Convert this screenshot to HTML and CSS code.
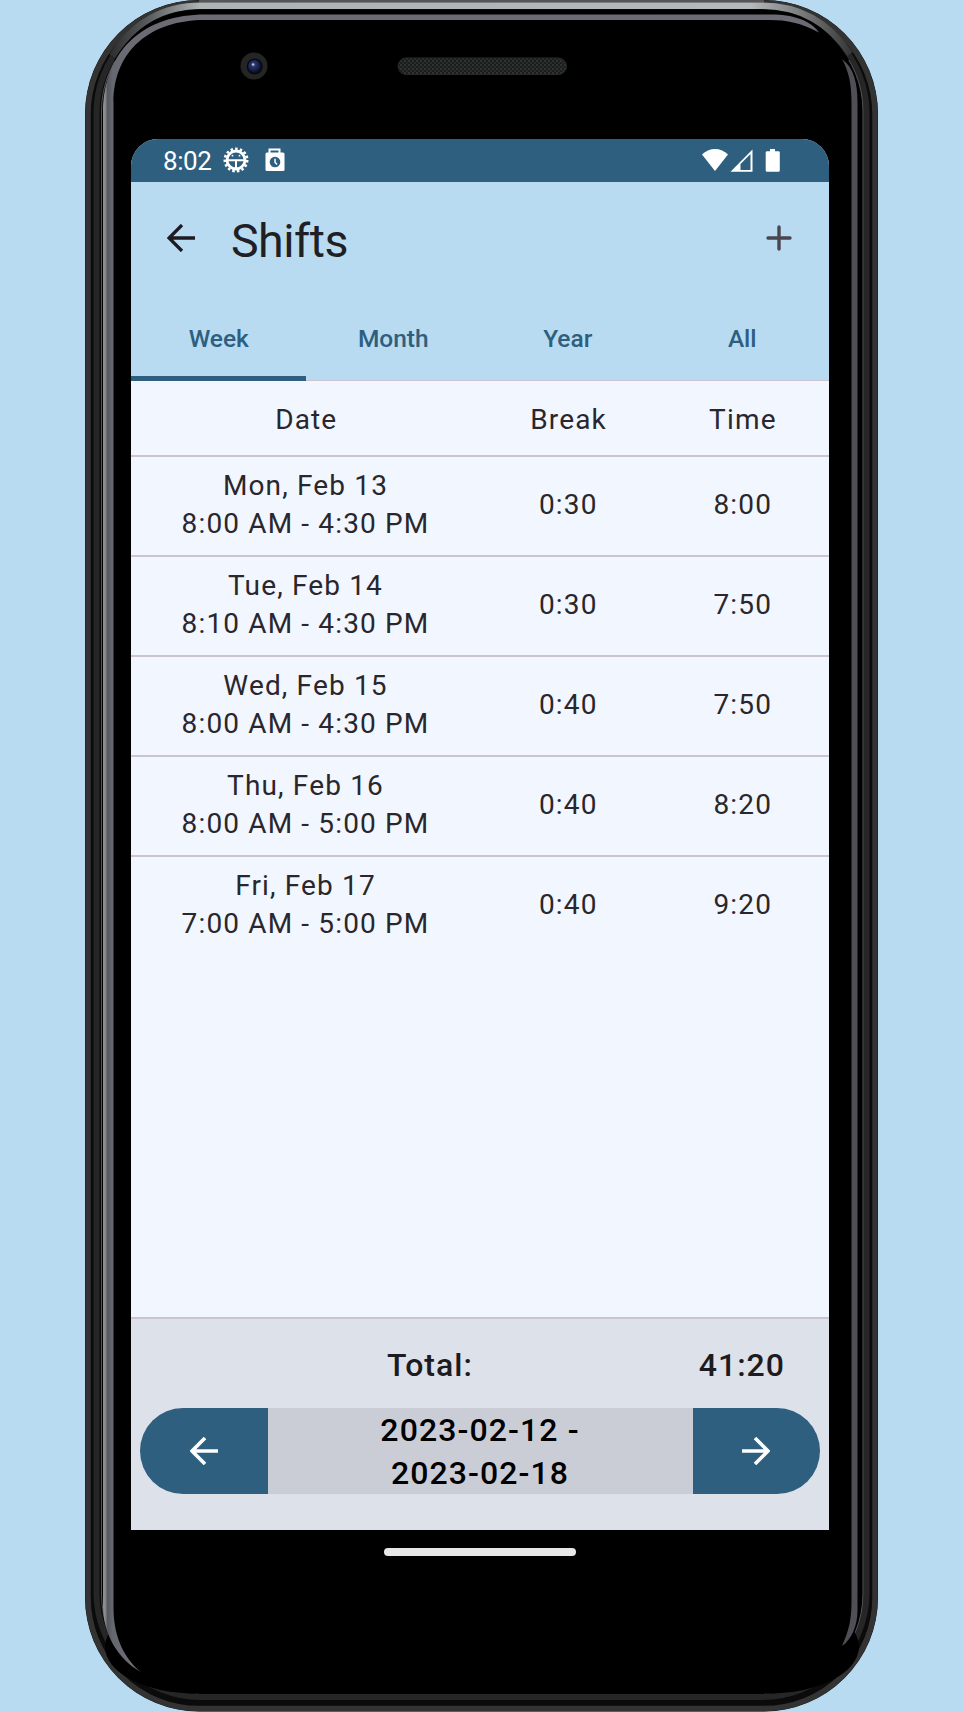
FILE: index.html
```html
<!DOCTYPE html>
<html lang="en">
<head>
<meta charset="utf-8">
<title>Shifts</title>
<link rel="stylesheet" href="styles.css">
</head>
<body>
<div class="stage">
<svg class="frame" viewBox="0 0 963 1712" aria-hidden="true">
  <defs>
    <linearGradient id="topBand" x1="100" x2="865" y1="0" y2="0" gradientUnits="userSpaceOnUse">
      <stop offset="0" stop-color="#222"/><stop offset=".06" stop-color="#555859"/><stop offset=".13" stop-color="#aeb3b5"/>
      <stop offset=".85" stop-color="#b4b9bb"/><stop offset=".93" stop-color="#6d6f70"/><stop offset="1" stop-color="#222"/>
    </linearGradient>
    <linearGradient id="leftBand" x1="103" x2="126" y1="0" y2="0" gradientUnits="userSpaceOnUse">
      <stop offset="0" stop-color="#8d8f91"/><stop offset=".08" stop-color="#8d8f91"/><stop offset=".2" stop-color="#55585e"/><stop offset=".42" stop-color="#656870"/><stop offset="1" stop-color="#6c6a74"/>
    </linearGradient>
    <radialGradient id="lens" cx=".42" cy=".36" r=".6">
      <stop offset="0" stop-color="#7480a8"/><stop offset=".25" stop-color="#2a376c"/><stop offset=".7" stop-color="#17204a"/><stop offset="1" stop-color="#0c0f20"/>
    </radialGradient>
    <pattern id="mesh" width="4" height="4" patternUnits="userSpaceOnUse">
      <rect width="4" height="4" fill="#1b1d1d"/><rect width="2" height="2" fill="#303333"/><rect x="2" y="2" width="2" height="2" fill="#292c2c"/>
    </pattern>
  </defs>
  <rect x="85" y="0" width="793" height="1711.500" rx="114" fill="#0b0b0b"/>
  <rect x="88" y="3" width="787" height="1705.500" rx="111" fill="none" stroke="#343333" stroke-width="5.500"/>
  <rect x="96.500" y="9" width="770" height="1688" rx="104" fill="none" stroke="#262626" stroke-width="6"/>
  <rect x="101.500" y="12" width="761.500" height="1681" rx="99" fill="#000" stroke="#555758" stroke-width="1"/>
  <rect x="105" y="1600" width="754" height="93.500" rx="90" fill="#000"/>
  <path d="M199 1693H764" stroke="#000" stroke-width="2"/>
  <path d="M199 1H764" stroke="#555" stroke-width="3"/>
  <path d="M112 56C134 22 163 5.800 201 5.800H762C800 5.800 829 23 850 54" fill="none" stroke="url(#topBand)" stroke-width="6.500"/>
  <path d="M116 62C137 27 165 11.700 203 11.700H760C798 11.700 826 27 847 61" fill="none" stroke="#000" stroke-width="5"/>
  <path d="M103 114C103 48 146 14.500 205 14.500H771C796 14.500 812 22 819 32.500C801 23 787 20 770 20H205C151 20 113.500 50 113.500 103V1608C113.500 1640 127 1661 141 1672C119 1660 103 1635 103 1606Z" fill="url(#leftBand)"/>
  <path d="M842 59C854 68 857.500 83 857.500 103V1611C857.500 1626 851 1640 842 1646C849 1630 851.500 1620 851.500 1601V103C851.500 84 849 72 842 59Z" fill="#504e56"/>
  <circle cx="254" cy="66" r="13.500" fill="#252525"/><circle cx="254.700" cy="66.500" r="8" fill="#080a10"/><circle cx="254.500" cy="66.500" r="6.500" fill="url(#lens)"/><circle cx="253" cy="64.500" r="1.200" fill="#b2bad5"/>
  <rect x="398" y="58" width="168.500" height="16.500" rx="8.250" fill="url(#mesh)" stroke="#282a2a"/>
</svg>
<main class="screen">
  <div class="status">
    <span class="clock">8:02</span>
    <svg class="gear" viewBox="0 0 26 26"><circle cx="13" cy="13" r="9" fill="none" stroke="#fff" stroke-width="2.800"/><circle cx="13" cy="13" r="11.200" fill="none" stroke="#fff" stroke-width="2.600" stroke-dasharray="2.500 2.190"/><path d="M4 13.200H22M13 13V22" stroke="#fff" stroke-width="2"/><circle cx="9.500" cy="8.700" r=".9" fill="#fff"/><circle cx="16.500" cy="8.700" r=".9" fill="#fff"/></svg>
    <svg class="lock" viewBox="0 0 20 24"><path d="M4.500 5V1.500H14.500V5" fill="none" stroke="#fff" stroke-width="2"/><rect x=".5" y="4.500" width="19" height="18.500" rx="1.500" fill="#fff"/><circle cx="10" cy="14" r="5.300" fill="#2e5f7f"/><path d="M10 10.800V14.300L12 16.400" fill="none" stroke="#fff" stroke-width="1.500"/></svg>
    <svg class="signals" viewBox="0 0 80 26"><path d="M1 6.500C8-1 20-1 27 6.500L14 23Z" fill="#fff"/><path d="M29.500 23.700L51.500 1.500V23.700Z" fill="#fff"/><path d="M39.500 22V16L49.500 6V22Z" fill="#2e5f7f"/><path d="M69 1h5v2.200h3.500a1.300 1.300 0 0 1 1.300 1.300v18a1.300 1.300 0 0 1-1.300 1.300H66a1.300 1.300 0 0 1-1.300-1.300v-18A1.300 1.300 0 0 1 66 3.200h3Z" fill="#fff"/></svg>
  </div>
  <header class="appbar">
    <svg class="back" viewBox="0 0 28 28"><path d="M28 14H2M15 1L2 14L15 27" fill="none" stroke="#1d1b20" stroke-width="3.300"/></svg>
    <h1>Shifts</h1>
    <svg class="plus" viewBox="0 0 26 26"><path d="M2 13H24M13 2V24" stroke="#4a4550" stroke-width="3.400" stroke-linecap="round"/></svg>
  </header>
  <nav class="tabs"><span class="tab active">Week</span><span class="tab">Month</span><span class="tab">Year</span><span class="tab">All</span></nav>
  <section class="table">
    <div class="row head"><span>Date</span><span>Break</span><span>Time</span></div>
    <div class="row"><span>Mon, Feb 13<br>8:00 AM - 4:30 PM</span><span>0:30</span><span>8:00</span></div>
    <div class="row"><span>Tue, Feb 14<br>8:10 AM - 4:30 PM</span><span>0:30</span><span>7:50</span></div>
    <div class="row"><span>Wed, Feb 15<br>8:00 AM - 4:30 PM</span><span>0:40</span><span>7:50</span></div>
    <div class="row"><span>Thu, Feb 16<br>8:00 AM - 5:00 PM</span><span>0:40</span><span>8:20</span></div>
    <div class="row"><span>Fri, Feb 17<br>7:00 AM - 5:00 PM</span><span>0:40</span><span>9:20</span></div>
  </section>
  <footer class="footer">
    <div class="total"><span class="label">Total:</span><span>41:20</span></div>
    <div class="pager">
      <div class="btn prev"><svg viewBox="0 0 28 28"><path d="M28 14H2M15 1L2 14L15 27" fill="none" stroke="#fff" stroke-width="3.600"/></svg></div>
      <div class="range">2023-02-12 -<br>2023-02-18</div>
      <div class="btn next"><svg viewBox="0 0 28 28"><path d="M0 14H26M13 1L26 14L13 27" fill="none" stroke="#fff" stroke-width="3.600"/></svg></div>
    </div>
  </footer>
</main>
<div class="home"></div>
</div>
</body>
</html>
```
FILE: styles.css
```css
* { box-sizing: border-box; }
body { margin: 0; background: #b8dbf1; font-family: Roboto, sans-serif; color: #1d1b20; }
svg { display: block; }
.stage { position: relative; width: 963px; height: 1712px; padding: 139px 134px 0 131px; overflow: hidden; }
.frame { position: absolute; left: 0; top: 0; width: 963px; height: 1712px; }
.screen { position: relative; display: flex; flex-direction: column; height: 1391px; background: #f2f6ff; border-radius: 27px 27px 0 0; overflow: hidden; }
.status { flex: none; height: 42.500px; background: #2e5f7f; color: #fff; display: flex; align-items: center; padding: 2px 48px 0 32px; }
.clock { width: 59.500px; font-size: 26px; line-height: 30px; letter-spacing: -.4px; }
.gear { width: 26px; height: 26px; margin-top: -2px; }
.lock { width: 20px; height: 24px; margin: -2px 0 0 16.500px; }
.signals { width: 80px; height: 26px; margin: -1px 0 0 auto; }
.appbar { flex: none; height: 115.500px; background: #b8dbf1; display: flex; align-items: center; padding: 0 37px 0 36px; }
.back { width: 28px; height: 28px; margin-top: -2px; }
h1 { margin: 4px 0 0 36px; font-size: 46.500px; line-height: 56px; font-weight: 400; letter-spacing: -.5px; color: #211f24; }
.plus { width: 26px; height: 26px; margin: -2px 0 0 auto; }
.tabs { flex: none; height: 83.500px; background: #b8dbf1; border-bottom: 1.500px solid #cac4d0; display: grid; grid-template-columns: repeat(4, 1fr); color: #2e5f7f; font-size: 24.500px; font-weight: 500; line-height: 84px; text-align: center; }
.tab { height: 83.500px; padding-left: 1px; }
.active { border-bottom: 5px solid #2e5f7f; }
.table { flex: 1; color: #29272c; }
.row { height: 100px; border-bottom: 2px solid #cac4d0; display: grid; grid-template-columns: 2fr 1fr 1fr; align-items: center; text-align: center; font-size: 28px; line-height: 38px; letter-spacing: 1.150px; padding: 0 0 2px 0; }
.row span + span { padding-left: 2px; }
.row:last-child { border-bottom: 0; padding-bottom: 4px; }
.head { height: 76px; padding: 4px 0 0 1px; }
.footer { flex: none; height: 213.500px; background: #dde1ea; border-top: 2px solid #cac4d0; padding: 0 9px; font-weight: 500; font-size: 32px; letter-spacing: 1px; }
.total { height: 89px; display: grid; grid-template-columns: 3fr 1fr; margin: 0 -9px; text-align: center; align-items: center; padding: 3px 0 0 1px; }
.label { padding-left: 73px; }
.pager { height: 86.500px; display: flex; color: #000; line-height: 43.500px; text-align: center; letter-spacing: 1.100px; }
.btn { width: 127.500px; background: #2e5f7f; display: flex; align-items: center; justify-content: center; }
.btn svg { width: 28px; height: 28px; }
.prev { border-radius: 43.250px 0 0 43.250px; }
.next { border-radius: 0 43.250px 43.250px 0; }
.range { flex: 1; background: #cacdd6; padding-top: 1px; }
.home { position: relative; margin: 17.500px 0 0 252.500px; width: 192.500px; height: 8px; border-radius: 4px; background: #e8e6e6; }
```
